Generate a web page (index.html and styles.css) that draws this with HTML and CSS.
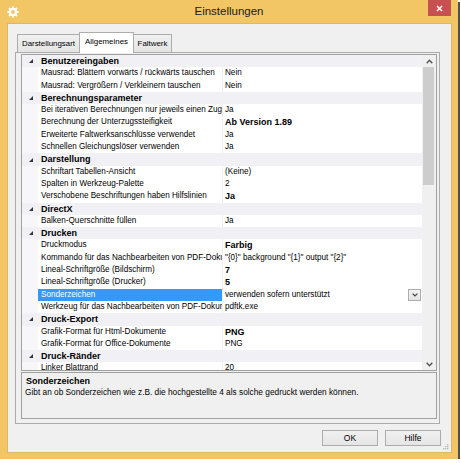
FILE: index.html
```html
<!DOCTYPE html>
<html lang="de">
<head>
<meta charset="utf-8">
<title>Einstellungen</title>
<link rel="stylesheet" href="styles.css">
</head>
<body>
<div class="window">
  <div class="titlebar">
    <div class="tb-left">
      <svg class="icon" viewBox="0 0 12 12" width="12" height="12">
        <g fill="#fff">
          <circle cx="6" cy="6" r="4.2"/>
          <rect x="5" y="0.4" width="2" height="2.6"/>
          <rect x="5" y="0.4" width="2" height="2.6" transform="rotate(45 6 6)"/>
          <rect x="5" y="0.4" width="2" height="2.6" transform="rotate(90 6 6)"/>
          <rect x="5" y="0.4" width="2" height="2.6" transform="rotate(135 6 6)"/>
          <rect x="5" y="0.4" width="2" height="2.6" transform="rotate(180 6 6)"/>
          <rect x="5" y="0.4" width="2" height="2.6" transform="rotate(225 6 6)"/>
          <rect x="5" y="0.4" width="2" height="2.6" transform="rotate(270 6 6)"/>
          <rect x="5" y="0.4" width="2" height="2.6" transform="rotate(315 6 6)"/>
        </g>
        <circle cx="6" cy="6" r="1.9" fill="#f2c664"/>
      </svg>
    </div>
    <div class="title">Einstellungen</div>
    <div class="tb-right">
      <div class="close">
        <svg viewBox="0 0 7 7" width="7" height="7"><path d="M1 1L6 6M6 1L1 6" stroke="#fff" stroke-width="1.5" fill="none"/></svg>
      </div>
    </div>
  </div>
  <div class="client">
    <div class="tabs">
      <div class="tab t1">Darstellungsart</div>
      <div class="tab t2 active">Allgemeines</div>
      <div class="tab t3">Faltwerk</div>
    </div>
    <div class="panel">
      <div class="grid">
        <div class="rows">
          <div class="row cat"><div class="gutter"><svg viewBox="0 0 4 4" width="4" height="4"><polygon points="4,0 4,4 0,4" fill="#333"/></svg></div><div class="cname">Benutzereingaben</div></div>
          <div class="row"><div class="gutter"></div><div class="name">Mausrad: Blättern vorwärts / rückwärts tauschen</div><div class="value">Nein</div></div>
          <div class="row"><div class="gutter"></div><div class="name">Mausrad: Vergrößern / Verkleinern tauschen</div><div class="value">Nein</div></div>
          <div class="row cat"><div class="gutter"><svg viewBox="0 0 4 4" width="4" height="4"><polygon points="4,0 4,4 0,4" fill="#333"/></svg></div><div class="cname">Berechnungsparameter</div></div>
          <div class="row"><div class="gutter"></div><div class="name">Bei iterativen Berechnungen nur jeweils einen Zug</div><div class="value">Ja</div></div>
          <div class="row"><div class="gutter"></div><div class="name">Berechnung der Unterzugssteifigkeit</div><div class="value b">Ab Version 1.89</div></div>
          <div class="row"><div class="gutter"></div><div class="name">Erweiterte Faltwerksanschlüsse verwendet</div><div class="value">Ja</div></div>
          <div class="row"><div class="gutter"></div><div class="name">Schnellen Gleichungslöser verwenden</div><div class="value">Ja</div></div>
          <div class="row cat"><div class="gutter"><svg viewBox="0 0 4 4" width="4" height="4"><polygon points="4,0 4,4 0,4" fill="#333"/></svg></div><div class="cname">Darstellung</div></div>
          <div class="row"><div class="gutter"></div><div class="name">Schriftart Tabellen-Ansicht</div><div class="value">(Keine)</div></div>
          <div class="row"><div class="gutter"></div><div class="name">Spalten in Werkzeug-Palette</div><div class="value">2</div></div>
          <div class="row"><div class="gutter"></div><div class="name">Verschobene Beschriftungen haben Hilfslinien</div><div class="value b">Ja</div></div>
          <div class="row cat"><div class="gutter"><svg viewBox="0 0 4 4" width="4" height="4"><polygon points="4,0 4,4 0,4" fill="#333"/></svg></div><div class="cname">DirectX</div></div>
          <div class="row"><div class="gutter"></div><div class="name">Balken-Querschnitte füllen</div><div class="value">Ja</div></div>
          <div class="row cat"><div class="gutter"><svg viewBox="0 0 4 4" width="4" height="4"><polygon points="4,0 4,4 0,4" fill="#333"/></svg></div><div class="cname">Drucken</div></div>
          <div class="row"><div class="gutter"></div><div class="name">Druckmodus</div><div class="value b">Farbig</div></div>
          <div class="row"><div class="gutter"></div><div class="name">Kommando für das Nachbearbeiten von PDF-Dokumenten</div><div class="value">"{0}" background "{1}" output "{2}"</div></div>
          <div class="row"><div class="gutter"></div><div class="name">Lineal-Schriftgröße (Bildschirm)</div><div class="value b">7</div></div>
          <div class="row"><div class="gutter"></div><div class="name">Lineal-Schriftgröße (Drucker)</div><div class="value b">5</div></div>
          <div class="row sel"><div class="gutter"></div><div class="name">Sonderzeichen</div><div class="value"><span>verwenden sofern unterstützt</span><div class="dd"><svg viewBox="0 0 6 4" width="6" height="4"><polyline points="0.6,0.6 3,3 5.4,0.6" fill="none" stroke="#444" stroke-width="1.2"/></svg></div></div></div>
          <div class="row"><div class="gutter"></div><div class="name">Werkzeug für das Nachbearbeiten von PDF-Dokumenten</div><div class="value">pdftk.exe</div></div>
          <div class="row cat"><div class="gutter"><svg viewBox="0 0 4 4" width="4" height="4"><polygon points="4,0 4,4 0,4" fill="#333"/></svg></div><div class="cname">Druck-Export</div></div>
          <div class="row"><div class="gutter"></div><div class="name">Grafik-Format für Html-Dokumente</div><div class="value b">PNG</div></div>
          <div class="row"><div class="gutter"></div><div class="name">Grafik-Format für Office-Dokumente</div><div class="value">PNG</div></div>
          <div class="row cat"><div class="gutter"><svg viewBox="0 0 4 4" width="4" height="4"><polygon points="4,0 4,4 0,4" fill="#333"/></svg></div><div class="cname">Druck-Ränder</div></div>
          <div class="row"><div class="gutter"></div><div class="name">Linker Blattrand</div><div class="value">20</div></div>
        </div>
        <div class="vscroll">
          <div class="sb-btn"><svg viewBox="0 0 7 5" width="7" height="5"><polyline points="0.7,4.2 3.5,1.2 6.3,4.2" fill="none" stroke="#555" stroke-width="1.4"/></svg></div>
          <div class="thumb"></div>
          <div class="track"></div>
          <div class="sb-btn"><svg viewBox="0 0 7 5" width="7" height="5"><polyline points="0.7,0.8 3.5,3.8 6.3,0.8" fill="none" stroke="#555" stroke-width="1.4"/></svg></div>
        </div>
      </div>
      <div class="desc">
        <div class="desc-title">Sonderzeichen</div>
        <div class="desc-text">Gibt an ob Sonderzeichen wie z.B. die hochgestellte 4 als solche gedruckt werden können.</div>
      </div>
    </div>
    <div class="buttons">
      <div class="btn">OK</div>
      <div class="btn">Hilfe</div>
    </div>
    <svg class="grip" viewBox="0 0 6 6" width="6" height="6">
      <g fill="#b5b5b5"><rect x="4" y="0" width="1.3" height="1.3"/><rect x="2" y="2" width="1.3" height="1.3"/><rect x="4" y="2" width="1.3" height="1.3"/><rect x="0" y="4" width="1.3" height="1.3"/><rect x="2" y="4" width="1.3" height="1.3"/><rect x="4" y="4" width="1.3" height="1.3"/></g>
    </svg>
  </div>
</div>
</body>
</html>
```

FILE: styles.css
```css
html, body {
  margin: 0;
  padding: 0;
  background: #ffffff;
}
body {
  font-family: "Liberation Sans", Arial, sans-serif;
  color: #000;
}
.window {
  width: 458px;
  height: 459px;
  background: #f2c664;
  box-shadow: 2px 2px 0 #505050;
  display: flex;
  flex-direction: column;
}
.titlebar {
  height: 24px;
  display: grid;
  grid-template-columns: 1fr auto 1fr;
  align-items: start;
}
.tb-left {
  display: flex;
}
.icon {
  margin: 6px 0 0 7px;
  display: block;
}
.title {
  font-size: 11.5px;
  line-height: 23px;
  color: #1a1a1a;
}
.tb-right {
  display: flex;
  justify-content: flex-end;
}
.close {
  width: 23px;
  height: 16px;
  margin-right: 7px;
  background: #c75050;
  display: flex;
  align-items: center;
  justify-content: center;
}
.close svg { display: block; }
.client {
  flex: 1;
  margin: 0 7px 7px 8px;
  background: #f0f0f0;
  padding: 8px 10px 6px 7px;
  display: flex;
  flex-direction: column;
  position: relative;
  box-shadow: 0 0 0 1px #d9b866;
}
.tabs {
  display: flex;
  align-items: flex-end;
  height: 20px;
  padding-left: 2px;
  position: relative;
  z-index: 1;
}
.tab {
  box-sizing: border-box;
  height: 18px;
  border: 1px solid #acacac;
  border-bottom: none;
  background: linear-gradient(#f0f0f0, #e5e5e5);
  font-size: 7.9px;
  line-height: 17px;
  text-align: center;
  white-space: nowrap;
  color: #000;
}
.t1 { width: 63px; }
.t2 { width: 55px; margin-left: -1px; }
.t3 { width: 39px; margin-left: -1px; }
.tab.active {
  height: 21px;
  margin-bottom: -1px;
  background: #ffffff;
  line-height: 18px;
  position: relative;
  z-index: 2;
}
.panel {
  box-sizing: border-box;
  height: 372px;
  margin-right: 1px;
  border: 1px solid #acacac;
  background: #f0f0f0;
  padding: 1px 2px 4px 5px;
  display: flex;
  flex-direction: column;
}
.grid {
  box-sizing: border-box;
  height: 317px;
  border: 1px solid #a0a0a0;
  background: #ffffff;
  display: flex;
}
.rows {
  flex: 1;
  overflow: hidden;
  display: flex;
  flex-direction: column;
}
.row {
  flex: none;
  height: 12.3px;
  display: flex;
  font-size: 8.15px;
  line-height: 12.3px;
  white-space: nowrap;
}
.gutter {
  width: 16px;
  flex: none;
  background: #f7f7fa;
  display: flex;
  align-items: center;
  justify-content: center;
}
.gutter svg { display: block; margin-left: 1px; }
.name {
  box-sizing: border-box;
  width: 185px;
  flex: none;
  padding-left: 3px;
  overflow: hidden;
  border-right: 1px solid #eeeef2;
}
.value {
  flex: 1;
  padding-left: 2px;
  display: flex;
  align-items: center;
  overflow: hidden;
}
.value.b {
  font-weight: bold;
  font-size: 9px;
}
.row.cat {
  background: #f0f0f5;
  font-weight: bold;
  font-size: 9px;
}
.row.cat .gutter { background: transparent; }
.cname { padding-left: 3px; }
.row.sel .name {
  background: #3399ff;
  color: #ffffff;
}
.dd {
  box-sizing: border-box;
  margin-left: auto;
  margin-right: 1px;
  width: 13px;
  height: 12px;
  border: 1px solid #acacac;
  background: linear-gradient(#f2f2f2, #e3e3e3);
  display: flex;
  align-items: center;
  justify-content: center;
}
.dd svg { display: block; }
.vscroll {
  width: 14px;
  flex: none;
  background: #f0f0f0;
  display: flex;
  flex-direction: column;
}
.sb-btn {
  height: 12px;
  flex: none;
  display: flex;
  align-items: center;
  justify-content: center;
}
.sb-btn svg { display: block; margin-left: 0px; }
.thumb {
  height: 118px;
  flex: none;
  background: #cdcdcd;
  margin: 0 2px 0 1px;
}
.track { flex: 1; }
.desc {
  box-sizing: border-box;
  margin-top: 1px;
  height: 47px;
  border: 1px solid #a0a0a0;
  padding: 3px 3px;
  background: #f0f0f0;
}
.desc-title {
  font-weight: bold;
  font-size: 9px;
  line-height: 11px;
  padding-left: 1px;
}
.desc-text {
  font-size: 8.3px;
  line-height: 11px;
  white-space: nowrap;
}
.buttons {
  display: flex;
  justify-content: flex-end;
  gap: 7px;
  margin-top: 6px;
}
.btn {
  box-sizing: border-box;
  width: 56px;
  height: 16px;
  border: 1px solid #acacac;
  background: linear-gradient(#f0f0f0, #e5e5e5);
  font-size: 8.5px;
  line-height: 14px;
  text-align: center;
}
.grip {
  position: absolute;
  right: 2px;
  bottom: 2px;
  display: block;
}
```
